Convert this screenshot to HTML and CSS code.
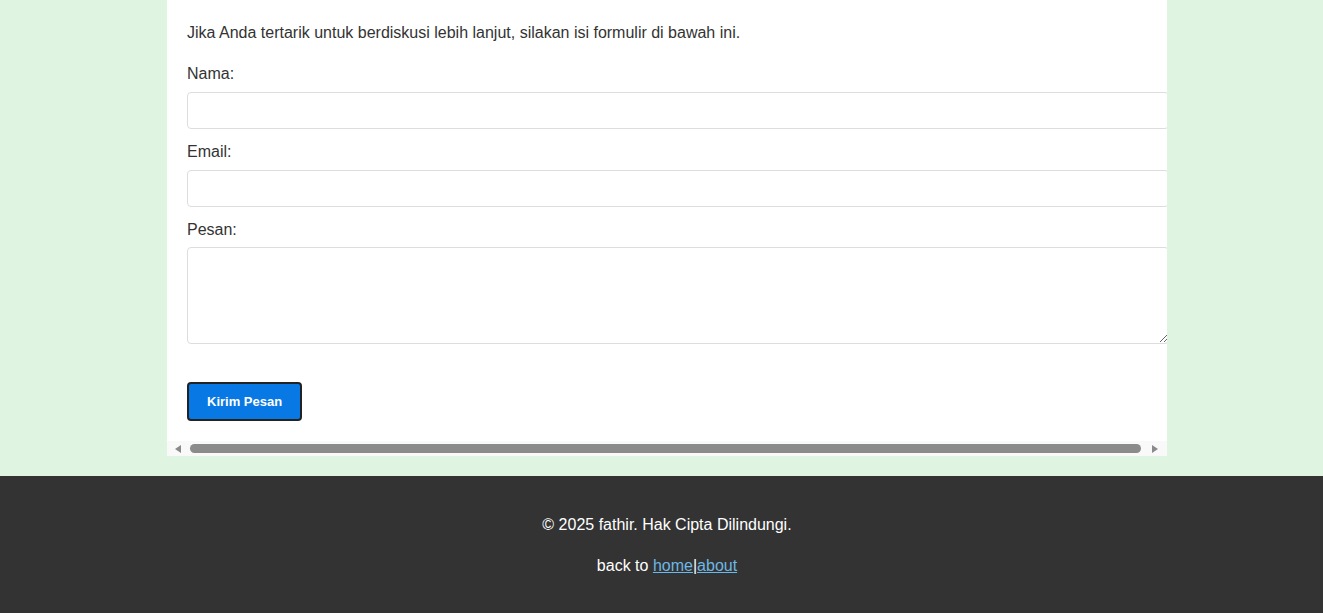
FILE: index.html
```html
<!DOCTYPE html>
<html lang="id">
<head>
<meta charset="utf-8">
<title>Kontak</title>
<link rel="stylesheet" href="styles.css">
</head>
<body>
<main class="page">
  <section class="card">
    <div class="card-body">
      <p class="intro">Jika Anda tertarik untuk berdiskusi lebih lanjut, silakan isi formulir di bawah ini.</p>
      <form class="form">
        <label class="label" for="nama">Nama:</label>
        <input class="field" type="text" id="nama">
        <label class="label" for="email">Email:</label>
        <input class="field" type="email" id="email">
        <label class="label" for="pesan">Pesan:</label>
        <textarea class="field area" id="pesan"></textarea>
        <button class="btn" type="button">Kirim Pesan</button>
      </form>
    </div>
    <div class="hscroll" aria-hidden="true">
      <span class="arrow-box arrow-box-left"><span class="arrow arrow-left"></span></span>
      <span class="thumb"></span>
      <span class="arrow-box arrow-box-right"><span class="arrow arrow-right"></span></span>
    </div>
  </section>
</main>
<footer class="footer">
  <p class="foot-line foot-first">© 2025 fathir. Hak Cipta Dilindungi.</p>
  <p class="foot-line foot-last">back to <a class="foot-link" href="#">home</a>|<a class="foot-link" href="#">about</a></p>
</footer>
</body>
</html>
```
FILE: styles.css
```css
html, body {
  margin: 0;
  padding: 0;
}
body {
  background: #e0f5e1;
  font-family: "Liberation Sans", Arial, sans-serif;
  font-size: 16px;
  line-height: 1.6;
  color: #333;
}
.page {
  padding: 0 0 20px 11px;
}
.card {
  width: 1000px;
  margin: 0 auto;
  background: #fff;
  overflow: hidden;
}
.card-body {
  width: 1000px;
  box-sizing: border-box;
  padding: 20px;
}
.intro {
  margin: 0 0 15px 0;
}
.form {
  display: block;
}
.label {
  display: block;
}
.field {
  display: block;
  width: 100%;
  padding: 10px;
  margin: 5.5px 0 10px 0;
  border: 1px solid #ddd;
  border-radius: 4px;
  font-family: "Liberation Sans", Arial, sans-serif;
  font-size: 13.33px;
  line-height: normal;
  color: #333;
  background: #fff;
}
.area {
  height: 97px;
  box-sizing: border-box;
  width: calc(100% + 22px);
  margin-top: 5px;
  font-family: "Liberation Mono", monospace;
}
.btn {
  display: block;
  margin-top: 38px;
  padding: 10px 18px;
  background: #0878e4;
  color: #fff;
  border: 2px solid #222;
  border-radius: 4px;
  font-family: "Liberation Sans", Arial, sans-serif;
  font-size: 13px;
  font-weight: bold;
  line-height: 15px;
}
.hscroll {
  display: flex;
  align-items: center;
  height: 15px;
  background: #f9f9f9;
}
.arrow-box {
  width: 15px;
  height: 15px;
  box-sizing: border-box;
  display: flex;
  align-items: center;
  flex: none;
}
.arrow-box-left {
  padding-left: 8px;
}
.arrow-box-right {
  padding-left: 0;
}
.arrow {
  width: 0;
  height: 0;
  border-top: 4.5px solid transparent;
  border-bottom: 4.5px solid transparent;
}
.arrow-left {
  border-right: 6px solid #8a8a8a;
}
.arrow-right {
  border-left: 6px solid #8a8a8a;
}
.thumb {
  flex: 1;
  height: 9px;
  margin: 0 11px 0 8px;
  background: #8b8b8b;
  border-radius: 5px;
}
.footer {
  background: #333;
  color: #fff;
  text-align: center;
  padding: 20px 20px 20px 31px;
}
.foot-first {
  margin: 16px 0 15px 0;
}
.foot-last {
  margin: 15px 0 16px 0;
}
.foot-link {
  color: #6cb8e6;
}
```
